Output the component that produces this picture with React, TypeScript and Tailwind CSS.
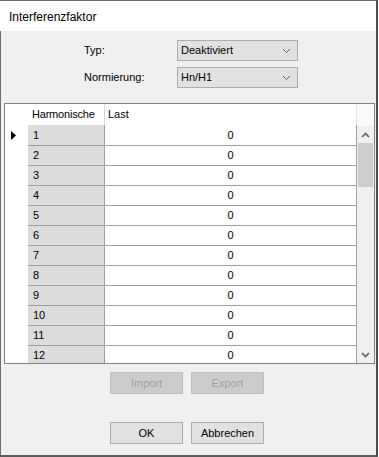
import React from "react";

const Chevron = ({ up = false, color = "#606060", w = 1 }: { up?: boolean; color?: string; w?: number }) => (
  <svg width="9" height="6" viewBox="0 0 9 6">
    {up ? (
      <polyline points="1,5 4.5,1.5 8,5" fill="none" stroke={color} strokeWidth={w} />
    ) : (
      <polyline points="1,1 4.5,4.5 8,1" fill="none" stroke={color} strokeWidth={w} />
    )}
  </svg>
);

const Combo = ({ value }: { value: string }) => (
  <div className="w-[121px] h-[21px] bg-[#e1e1e1] border border-[#adadad] flex items-center pl-[3px] pr-[6px] justify-between">
    <span className="text-[11px] text-black">{value}</span>
    <Chevron />
  </div>
);

const Btn = ({ label, disabled = false }: { label: string; disabled?: boolean }) => (
  <div
    className={
      disabled
        ? "w-[73px] h-[22px] bg-[#cccccc] border border-[#bfbfbf] text-[#a0a0a0] text-[11px] flex items-center justify-center"
        : "w-[73px] h-[22px] bg-[#e1e1e1] border border-[#adadad] text-black text-[11px] flex items-center justify-center"
    }
  >
    {label}
  </div>
);

export default function App() {
  const rows = Array.from({ length: 12 }, (_, i) => i + 1);
  return (
    <div
      className="w-[379px] h-[457px] bg-white overflow-hidden"
      style={{ fontFamily: '"Liberation Sans", Arial, sans-serif' }}
    >
      <div className="w-[378px] h-[457px] flex flex-col border-t border-t-[#6e6e6e] border-r-2 border-r-[#4d4d4d] border-b-2 border-b-[#5a5a5a]">
        <div className="h-[30px] bg-white flex items-center pl-[9px] pt-[2px] text-[12px] text-black">
          Interferenzfaktor
        </div>
        <div className="flex-1 bg-[#f0f0f0] border-l border-l-[#6e6e6e] flex flex-col">
          <div className="pt-[9px] pl-[83px] flex flex-col gap-[6px]">
            <div className="flex">
              <div className="w-[93px] text-[11px] text-black pt-[2px]">Typ:</div>
              <Combo value="Deaktiviert" />
            </div>
            <div className="flex">
              <div className="w-[93px] text-[11px] text-black pt-[2px]">Normierung:</div>
              <Combo value="Hn/H1" />
            </div>
          </div>

          <div className="ml-[3px] mt-[15px] w-[371px] h-[261px] border border-[#828282] bg-white flex overflow-hidden">
            <div className="w-[352px] flex flex-col">
              <div className="h-[21px] flex shrink-0 text-[11px] text-black">
                <div className="w-[23px]" />
                <div className="w-[76px] flex items-center pl-[4px] tracking-[-0.2px]">Harmonische</div>
                <div className="w-[1px] bg-[#d8d8d8]" />
                <div className="w-[251px] flex items-center pl-[3px]">Last</div>
                <div className="w-[1px] bg-[#e4e4e4]" />
              </div>
              {rows.map((r) => (
                <div
                  key={r}
                  className={
                    r === 1
                      ? "h-[21px] flex shrink-0 text-[11px] text-black"
                      : "h-[20px] flex shrink-0 text-[11px] text-black"
                  }
                >
                  <div className="w-[23px] flex items-center pl-[6px]">
                    {r === 1 && (
                      <svg width="5" height="9" viewBox="0 0 5 9">
                        <polygon points="0,0 5,4.5 0,9" fill="#000" />
                      </svg>
                    )}
                  </div>
                  <div className="w-[76px] bg-[#dcdcdc] border-b border-b-[#a0a0a0] flex items-center pl-[5px]">
                    {r}
                  </div>
                  <div className="w-[1px] bg-[#a0a0a0]" />
                  <div className="w-[251px] border-b border-b-[#a0a0a0] flex items-center justify-center">0</div>
                  <div className="w-[1px] bg-[#a0a0a0]" />
                </div>
              ))}
            </div>
            <div className="w-[17px] flex flex-col">
              <div className="h-[22px] bg-[#fafafa] shrink-0" />
              <div className="flex-1 bg-[#f0f0f0] flex flex-col items-center">
                <div className="h-[17px] w-full flex items-center justify-center">
                  <Chevron up color="#606060" w={1.6} />
                </div>
                <div className="w-[15px] h-[44px] bg-[#cdcdcd]" />
                <div className="flex-1" />
                <div className="h-[17px] w-full flex items-center justify-center">
                  <Chevron color="#606060" w={1.6} />
                </div>
              </div>
            </div>
          </div>

          <div className="mt-[8px] pl-[109px] flex gap-[8px]">
            <Btn label="Import" disabled />
            <Btn label="Export" disabled />
          </div>
          <div className="mt-[28px] pl-[109px] flex gap-[8px]">
            <Btn label="OK" />
            <Btn label="Abbrechen" />
          </div>
        </div>
      </div>
    </div>
  );
}
